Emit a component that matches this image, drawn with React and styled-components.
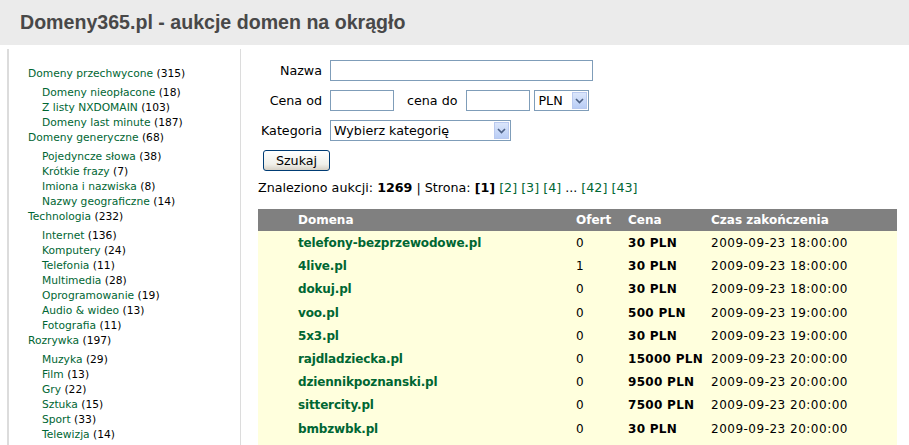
import styled, { createGlobalStyle } from "styled-components";

const GlobalStyle = createGlobalStyle`
  html, body {
    margin: 0;
    padding: 0;
    background: #fff;
    font-family: "DejaVu Sans", Verdana, sans-serif;
  }
`;

// data
const categories = [
  {
    name: "Domeny przechwycone", count: 315,
    subs: [["Domeny nieopłacone", 18], ["Z listy NXDOMAIN", 103], ["Domeny last minute", 187]],
  },
  {
    name: "Domeny generyczne", count: 68,
    subs: [["Pojedyncze słowa", 38], ["Krótkie frazy", 7], ["Imiona i nazwiska", 8], ["Nazwy geograficzne", 14]],
  },
  {
    name: "Technologia", count: 232,
    subs: [["Internet", 136], ["Komputery", 24], ["Telefonia", 11], ["Multimedia", 28], ["Oprogramowanie", 19], ["Audio & wideo", 13], ["Fotografia", 11]],
  },
  {
    name: "Rozrywka", count: 197,
    subs: [["Muzyka", 29], ["Film", 13], ["Gry", 22], ["Sztuka", 15], ["Sport", 33], ["Telewizja", 14]],
  },
];

const auctions = [
  ["telefony-bezprzewodowe.pl", 0, "30 PLN", "2009-09-23 18:00:00"],
  ["4live.pl", 1, "30 PLN", "2009-09-23 18:00:00"],
  ["dokuj.pl", 0, "30 PLN", "2009-09-23 18:00:00"],
  ["voo.pl", 0, "500 PLN", "2009-09-23 19:00:00"],
  ["5x3.pl", 0, "30 PLN", "2009-09-23 19:00:00"],
  ["rajdladziecka.pl", 0, "15000 PLN", "2009-09-23 20:00:00"],
  ["dziennikpoznanski.pl", 0, "9500 PLN", "2009-09-23 20:00:00"],
  ["sittercity.pl", 0, "7500 PLN", "2009-09-23 20:00:00"],
  ["bmbzwbk.pl", 0, "30 PLN", "2009-09-23 20:00:00"],
];

// style
const Header = styled.header`
  height: 45px;
  background: #ebebeb;
  display: flex;
  align-items: center;
  padding-left: 20px;
  h1 {
    margin: 0;
    font-family: "Liberation Sans", Arial, sans-serif;
    font-size: 19.6px;
    font-weight: bold;
    color: #484848;
  }
`;

const Layout = styled.div`
  display: flex;
  margin-top: 4px;
  padding-left: 7px;
`;

const Sidebar = styled.nav`
  width: 212px;
  border-left: 2px solid #dcdcdc;
  border-right: 1px solid #dcdcdc;
  padding: 17px 0 0 19px;
  font-size: 10.7px;
  min-height: 400px;
`;

const CatList = styled.ul`
  list-style: none;
  margin: 0;
  padding: 0;
`;

const SubList = styled.ul`
  list-style: none;
  margin: 4px 0 0;
  padding-left: 14px;
`;

const Item = styled.li`
  line-height: 15px;
  white-space: nowrap;
  a {
    color: #006633;
    text-decoration: none;
  }
  span {
    color: #000;
  }
`;

const Main = styled.main`
  flex: 1;
  padding: 11px 12px 0 17px;
  font-size: 12.7px;
`;

const SearchForm = styled.form`
  display: grid;
  grid-template-columns: 64px auto;
  column-gap: 8px;
  row-gap: 9px;
  align-items: center;
`;

const Label = styled.label`
  text-align: right;
  color: #000;
`;

const Field = styled.div`
  display: flex;
  align-items: center;
  gap: 4px;
`;

const TextInput = styled.input`
  box-sizing: border-box;
  width: ${(p) => p.$w}px;
  height: 21px;
  border: 1px solid #7f9db9;
  margin: 0;
  padding: 0 3px;
`;

const InlineLabel = styled.span`
  margin: 0 5px 0 9px;
`;

const Select = styled.div`
  box-sizing: border-box;
  width: ${(p) => p.$w}px;
  height: 21px;
  border: 1px solid #7f9db9;
  display: flex;
  align-items: center;
  justify-content: space-between;
  padding: 1px;
  font-size: 12.7px;
  span {
    padding-left: 2px;
  }
`;

const Arrow = styled.i`
  width: 15px;
  height: 17px;
  background: linear-gradient(#dbe6fb, #b9cdf5);
  border: 1px solid #b9c9ef;
  box-sizing: border-box;
  display: flex;
  align-items: center;
  justify-content: center;
`;

const Button = styled.button`
  grid-column: 1 / span 2;
  justify-self: start;
  margin-left: 5px;
  width: 67px;
  height: 21px;
  border: 1px solid #003c74;
  border-radius: 3px;
  background: linear-gradient(#ffffff, #f0f0ea 70%, #d6d0c5);
  font-family: "DejaVu Sans", Verdana, sans-serif;
  font-size: 12.7px;
  padding: 0;
  color: #000;
`;

const Summary = styled.p`
  margin: 9px 0 14px;
  b { color: #000; }
  a {
    color: #006633;
    text-decoration: none;
  }
`;

const Table = styled.div`
  width: 639px;
  background: #ffffdd;
  padding-bottom: 6px;
`;

const Row = styled.div`
  display: grid;
  grid-template-columns: 40px 278px 52px 83px 1fr;
  align-items: center;
  box-sizing: border-box;
  height: ${(p) => (p.$head ? 22 : 23.2)}px;
  padding-top: ${(p) => (p.$head ? 0 : 1)}px;
  background: ${(p) => (p.$head ? "#808080" : "transparent")};
  color: ${(p) => (p.$head ? "#fff" : "#000")};
  font-weight: ${(p) => (p.$head ? "bold" : "normal")};
  font-size: 12px;
  white-space: nowrap;
`;

const Domain = styled.a`
  color: #006633;
  font-weight: bold;
  text-decoration: none;
  letter-spacing: -0.15px;
`;

const Price = styled.span`
  font-weight: bold;
  letter-spacing: 0.3px;
`;

const Time = styled.span`
  letter-spacing: 0.5px;
`;

function Chevron() {
  return (
    <svg width="9" height="6" viewBox="0 0 9 6">
      <path d="M1 1 L4.5 4.5 L8 1" fill="none" stroke="#4d6185" strokeWidth="1.6" />
    </svg>
  );
}

export default function App() {
  return (
    <>
      <GlobalStyle />
      <Header>
        <h1>Domeny365.pl - aukcje domen na okrągło</h1>
      </Header>
      <Layout>
        <Sidebar>
          <CatList>
            {categories.map((c) => (
              <Item key={c.name}>
                <a href="#">{c.name}</a> <span>({c.count})</span>
                <SubList>
                  {c.subs.map(([n, k]) => (
                    <Item key={n}>
                      <a href="#">{n}</a> <span>({k})</span>
                    </Item>
                  ))}
                </SubList>
              </Item>
            ))}
          </CatList>
        </Sidebar>
        <Main>
          <SearchForm>
            <Label>Nazwa</Label>
            <Field>
              <TextInput $w={263} />
            </Field>
            <Label>Cena od</Label>
            <Field>
              <TextInput $w={64} />
              <InlineLabel>cena do</InlineLabel>
              <TextInput $w={64} />
              <Select $w={55}>
                <span>PLN</span>
                <Arrow><Chevron /></Arrow>
              </Select>
            </Field>
            <Label>Kategoria</Label>
            <Field>
              <Select $w={181}>
                <span>Wybierz kategorię</span>
                <Arrow><Chevron /></Arrow>
              </Select>
            </Field>
            <Button type="button">Szukaj</Button>
          </SearchForm>
          <Summary>
            Znaleziono aukcji: <b>1269</b> | Strona: <b>[1]</b> <a href="#">[2]</a> <a href="#">[3]</a>{" "}
            <a href="#">[4]</a> ... <a href="#">[42]</a> <a href="#">[43]</a>
          </Summary>
          <Table>
            <Row $head>
              <span />
              <span>Domena</span>
              <span>Ofert</span>
              <span>Cena</span>
              <span>Czas zakończenia</span>
            </Row>
            {auctions.map(([d, o, p, t]) => (
              <Row key={d}>
                <span />
                <Domain href="#">{d}</Domain>
                <span>{o}</span>
                <Price>{p}</Price>
                <Time>{t}</Time>
              </Row>
            ))}
          </Table>
        </Main>
      </Layout>
    </>
  );
}
